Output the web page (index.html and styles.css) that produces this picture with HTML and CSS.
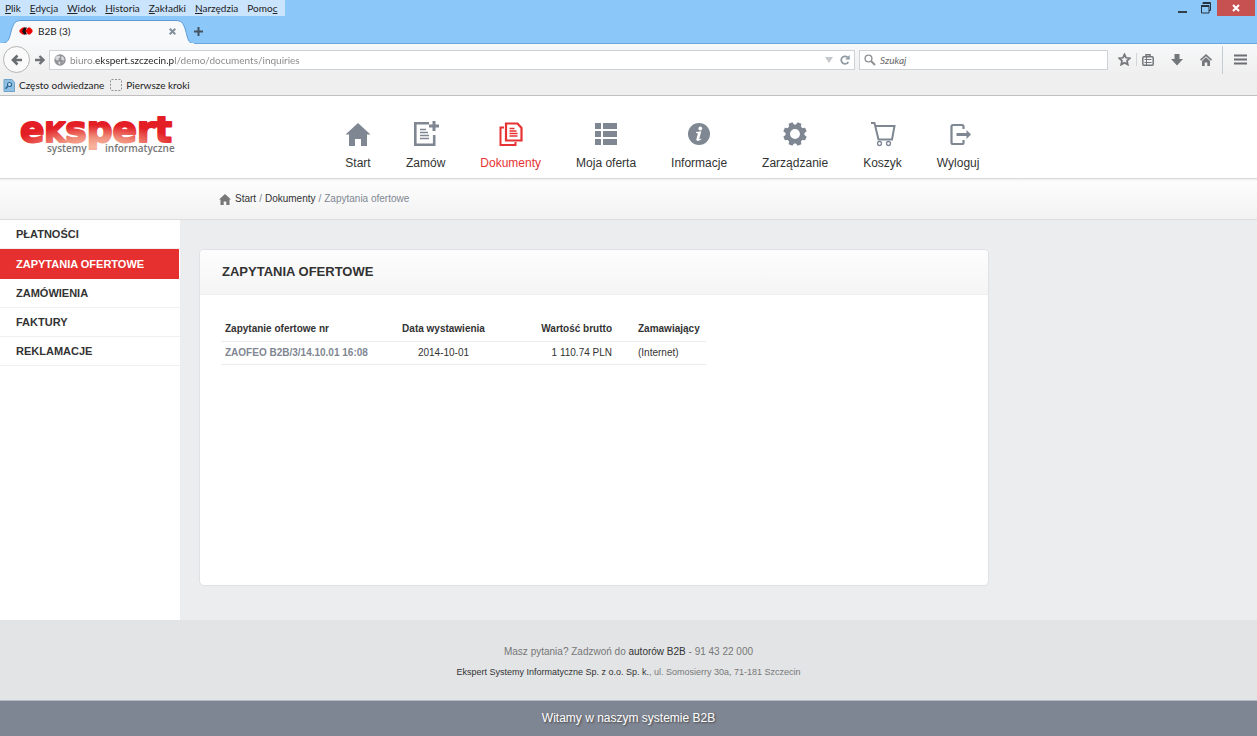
FILE: index.html
```html
<!DOCTYPE html>
<html lang="pl">
<head>
<meta charset="utf-8">
<title>B2B (3)</title>
<link rel="stylesheet" href="styles.css">
</head>
<body>
<div class="browser">
  <div class="titlebar">
    <div class="menubar">
      <button class="menu"><u>P</u>lik</button>
      <button class="menu"><u>E</u>dycja</button>
      <button class="menu"><u>W</u>idok</button>
      <button class="menu"><u>H</u>istoria</button>
      <button class="menu"><u>Z</u>akładki</button>
      <button class="menu"><u>N</u>arzędzia</button>
      <button class="menu">Pomo<u>c</u></button>
    </div>
    <div class="window-buttons">
      <button class="win" aria-label="Minimalizuj"><svg width="10" height="12"><path d="M0 10h9" stroke="#333f4a" stroke-width="2"/></svg></button>
      <button class="win" aria-label="Przywróć"><svg width="10" height="12" fill="none" stroke="#26323d"><path d="M2 2V.5h7.500v8H8"/><path d="M2 1.500h8" stroke-width="1"/><path d="M.5 3.500h7.500v7.500H.5z"/><path d="M0 4h8" stroke-width="2"/></svg></button>
      <button class="win win-close" aria-label="Zamknij"><svg width="8" height="8"><path d="M1 1l6 6M7 1L1 7" stroke="#fff" stroke-width="2"/></svg></button>
    </div>
  </div>
  <div class="tabstrip">
    <div class="tab">
      <svg class="tab-shape" width="194" height="24" viewBox="0 0 194 24"><path d="M0 23.500C9 23.500 9 19 11.500 10 14 2 16 .5 22 .5H175C181 .5 183 2 185.500 10 188 19 188 23.500 194 23.500V24H0z" fill="#f8f9fa" stroke="#5d9bd6" stroke-width="1"/><path d="M0 24h194" stroke="#f8f9fa" stroke-width="2"/></svg>
      <div class="tab-content">
        <svg width="14" height="10" viewBox="0 0 14 10"><path d="M3.500 1.500h2L8 5 5.500 8.500h-2L.5 6V4z" fill="#f00000"/><path d="M5 1.500h3L6.500 5 8 8.500H5L3 5z" fill="#111"/><path d="M9 1.500h2L13.500 4v2L11 8.500H9L6.500 5z" fill="#f00000"/></svg>
        <span class="tab-title">B2B (3)</span>
        <button class="icon-button" aria-label="Zamknij kartę"><svg width="7" height="7"><path d="M.7.7l5.600 5.600M6.300.7L.7 6.300" stroke="#84909b" stroke-width="2"/></svg></button>
      </div>
    </div>
    <button class="icon-button new-tab" aria-label="Nowa karta"><svg width="9" height="9"><path d="M4.500 0v9M0 4.500h9" stroke="#44535f" stroke-width="2"/></svg></button>
  </div>
  <div class="toolbar">
    <button class="back" aria-label="Wstecz"><svg width="12" height="12" viewBox="0 0 12 12"><path d="M11 6H2M6.500 1.500L2 6l4.500 4.500" fill="none" stroke="#6a6e72" stroke-width="2.600"/></svg></button>
    <button class="icon-button forward" aria-label="Dalej"><svg width="10" height="10" viewBox="0 0 10 10"><path d="M0 5h8M4.500 1L8.500 5 4.500 9" fill="none" stroke="#6e7276" stroke-width="2.400"/></svg></button>
    <div class="field address">
      <svg width="12" height="12" viewBox="0 0 12 12"><circle cx="6" cy="6" r="5.700" fill="#8f9397"/><path d="M2 2.500l3-1 1.500 1.500L4.500 4.500 5 6 3 6.500 1 4.500zM7.500 2l2 1 1 3-2 .5L7 5zM4.500 7.500l2 .5-.5 2.500L4.500 10zM8.500 8l1-.5-.5 2z" fill="#d8dadc"/></svg>
      <input class="address-input" type="text" aria-label="Adres" value="biuro.ekspert.szczecin.pl/demo/documents/inquiries">
      <button class="icon-button" aria-label="Historia adresów"><svg width="8" height="6"><path d="M0 0h8L4 6z" fill="#c3c8cc"/></svg></button>
      <button class="icon-button" aria-label="Odśwież"><svg width="10" height="10" viewBox="0 0 10 10"><path d="M8.300 7A3.800 3.800 0 1 1 7.500 2.200" fill="none" stroke="#8c98a2" stroke-width="1.700"/><path d="M9.700 0v4.500H5.200z" fill="#8c98a2"/></svg></button>
    </div>
    <div class="field search">
      <svg width="12" height="12" viewBox="0 0 12 12"><circle cx="4.500" cy="4.500" r="3.400" fill="none" stroke="#8e9296" stroke-width="1.400"/><path d="M7 7l4 4" stroke="#8e9296" stroke-width="2"/></svg>
      <input class="search-input" type="text" aria-label="Szukaj" placeholder="Szukaj">
    </div>
    <div class="tools">
      <button class="icon-button" aria-label="Zakładka"><svg width="13" height="13" viewBox="0 0 13 13"><path d="M6.500 1.300l1.600 3.500 3.700.4L9 7.800l.8 3.800-3.300-1.900-3.300 1.900L4 7.800 1.200 5.200l3.700-.4z" fill="none" stroke="#73777b" stroke-width="1.700"/></svg></button>
      <span class="divider"></span>
      <button class="icon-button" aria-label="Lista zakładek"><svg width="12" height="12" viewBox="0 0 12 12" fill="none" stroke="#73777b"><rect x=".8" y="2.800" width="10.400" height="8.400" rx="1" stroke-width="1.500"/><path d="M4 2V.8h4V2" stroke-width="1.500"/><path d="M2.500 5.500h7M2.500 8.500h7M4.500 3v8"/></svg></button>
      <button class="icon-button" aria-label="Pobieranie"><svg width="12" height="12"><path d="M3.500 0h5v5H12l-6 6.500L0 5h3.500z" fill="#73777b"/></svg></button>
      <button class="icon-button" aria-label="Strona startowa"><svg width="12" height="12"><path d="M6 0l6 5.500-1 1.200L6 2.300 1 6.700 0 5.500zM6 3.300l4 3.600V12H7.300V8.500H4.700V12H2V6.900z" fill="#73777b"/></svg></button>
      <span class="divider divider-tall"></span>
      <button class="icon-button" aria-label="Menu"><svg width="13" height="12"><path d="M0 1.500h13M0 5.500h13M0 9.500h13" stroke="#6b6f74" stroke-width="2"/></svg></button>
    </div>
  </div>
  <div class="bookmarks">
    <a class="bookmark" href="#"><svg width="12" height="13" viewBox="0 0 12 13"><path d="M1 .5h8l2.500 3v9H1z" fill="#8fc0e2" stroke="#6fa3c9"/><circle cx="6.500" cy="5.500" r="2" fill="#c9e4f5" stroke="#2c6796" stroke-width="1.200"/><path d="M5 7L2.500 9.800" stroke="#2c6796" stroke-width="1.600"/></svg>Często odwiedzane</a>
    <a class="bookmark" href="#"><svg width="12" height="12"><rect x=".5" y=".5" width="11" height="11" rx="1" fill="none" stroke="#909090" stroke-dasharray="2 1.500"/></svg>Pierwsze kroki</a>
  </div>
</div>

<header class="header">
  <a class="logo" href="#" aria-label="ekspert systemy informatyczne">
    <svg width="164" height="46" viewBox="0 0 164 46">
      <defs>
        <radialGradient id="glow" gradientUnits="userSpaceOnUse" cx="0" cy="0" r="1" gradientTransform="translate(78 36) scale(86 22)">
          <stop offset="0" stop-color="#f8b8a0"/>
          <stop offset=".45" stop-color="#f08f7c"/>
          <stop offset="1" stop-color="#e31e24"/>
        </radialGradient>
      </defs>
      <text class="logo-name" x="1" y="31" fill="url(#glow)" stroke="url(#glow)">e<tspan class="logo-cap">K</tspan>spert</text>
      <text class="logo-sub" x="28" y="41">systemy</text>
      <text class="logo-sub" x="86" y="41">informatyczne</text>
    </svg>
  </a>
  <nav class="nav">
    <a class="nav-item" href="#"><svg width="26" height="26" viewBox="0 0 26 26"><path d="M13 2l12.500 11.500H22V25h-6v-7h-6v7H4V13.500H.5z"/></svg>Start</a>
    <a class="nav-item" href="#"><svg width="26" height="26" viewBox="0 0 26 26"><path d="M16 2.300H2.300v21.400h18.900V14" fill="none" stroke="currentColor" stroke-width="2.600"/><path d="M19.500 0h3v3.500H26v3h-3.500V10h-3V6.500H16v-3h3.500z"/><path d="M7 8.500h6M7 11.500h8M7 14.500h9M7 17.500h9" stroke="currentColor" stroke-width="1.600"/></svg>Zamów</a>
    <a class="nav-item active" href="#"><svg width="26" height="26" viewBox="0 0 26 26" fill="none" stroke="currentColor"><path d="M6 6.500H2.500v17.500h15V21" stroke-width="2"/><path d="M8 2.500h11.500l4 4.500v12.500H8z" stroke-width="2.200"/><path d="M11.500 7.500h5M11.500 10h7M11.500 12.500h8M11.500 15h8" stroke-width="1.300"/></svg>Dokumenty</a>
    <a class="nav-item" href="#"><svg width="26" height="26" viewBox="0 0 26 26"><path d="M2 2h6v6H2zM10 2h14v6H10zM2 10h6v6H2zM10 10h14v6H10zM2 18h6v6H2zM10 18h14v6H10z"/></svg>Moja oferta</a>
    <a class="nav-item" href="#"><svg width="26" height="26" viewBox="0 0 26 26"><circle cx="13" cy="13" r="11"/><circle cx="14.300" cy="7.500" r="1.900" fill="#fff"/><path d="M10 11l5.300-.7-2 7.200c-.2.800.4.700 1.700-.1l.4.700c-2 2.200-5.600 2.600-5 0l1.400-5.200c.1-.7-.6-.9-1.800-1z" fill="#fff"/></svg>Informacje</a>
    <a class="nav-item" href="#"><svg width="26" height="26" viewBox="0 0 26 26"><circle cx="13" cy="13" r="7.200" fill="none" stroke="currentColor" stroke-width="4.500"/><g id="teeth"><path d="M10 5l1-3.800h4L16 5zM10 21l1 3.800h4L16 21zM5 10l-3.800 1v4L5 16zM21 10l3.800 1v4L21 16z" transform="rotate(22.500 13 13)"/></g><use href="#teeth" transform="rotate(45 13 13)"/></svg>Zarządzanie</a>
    <a class="nav-item" href="#"><svg width="26" height="26" viewBox="0 0 26 26" fill="none" stroke="currentColor"><path d="M1 2h3.500l4 16.500H22L24.500 5H6" stroke-width="2"/><circle cx="9.500" cy="22.500" r="2" stroke-width="1.300"/><circle cx="18.500" cy="22.500" r="2" stroke-width="1.300"/></svg>Koszyk</a>
    <a class="nav-item" href="#"><svg width="26" height="26" viewBox="0 0 26 26"><path d="M18.500 8V5.500q0-1.500-1.500-1.500H8Q6.500 4 6.500 5.500v16Q6.500 23 8 23h9q1.500 0 1.500-1.500V19" fill="none" stroke="currentColor" stroke-width="2.200"/><path d="M11.500 12h10V9l4.500 4.500-4.500 4.500V15h-10z"/></svg>Wyloguj</a>
  </nav>
</header>

<nav class="breadcrumb" aria-label="Ścieżka">
  <svg width="12" height="11" viewBox="0 0 12 11"><path d="M6 0l6 5.500h-1.500V11H7.300V7.500H4.700V11H1.500V5.500H0z" fill="#777"/></svg>
  <a href="#">Start</a><span>/</span><a href="#">Dokumenty</a><span>/</span><span>Zapytania ofertowe</span>
</nav>

<div class="content">
  <nav class="sidebar" aria-label="Dokumenty">
    <a class="side-item" href="#">PŁATNOŚCI</a>
    <a class="side-item selected" href="#">ZAPYTANIA OFERTOWE</a>
    <a class="side-item" href="#">ZAMÓWIENIA</a>
    <a class="side-item" href="#">FAKTURY</a>
    <a class="side-item" href="#">REKLAMACJE</a>
  </nav>
  <main class="panel">
    <h1 class="panel-title">ZAPYTANIA OFERTOWE</h1>
    <div class="panel-body">
      <table class="inquiries">
        <thead><tr><th class="number">Zapytanie ofertowe nr</th><th class="date">Data wystawienia</th><th class="amount">Wartość brutto</th><th class="buyer">Zamawiający</th></tr></thead>
        <tbody><tr><td class="number"><a href="#">ZAOFEO B2B/3/14.10.01 16:08</a></td><td class="date">2014-10-01</td><td class="amount">1 110.74 PLN</td><td class="buyer">(Internet)</td></tr></tbody>
      </table>
    </div>
  </main>
</div>

<footer>
  <div class="contact">
    <p class="question">Masz pytania? Zadzwoń do <a href="#">autorów B2B</a> - 91 43 22 000</p>
    <p class="company"><a href="#">Ekspert Systemy Informatyczne Sp. z o.o. Sp. k.</a>, ul. Somosierry 30a, 71-181 Szczecin</p>
  </div>
  <div class="welcome">Witamy w naszym systemie B2B</div>
</footer>
</body>
</html>
```

FILE: styles.css
```css
* { box-sizing: border-box; }
body {
  margin: 0;
  min-height: 100vh;
  display: flex;
  flex-direction: column;
  font: 10px/16px "Liberation Sans", Arial, sans-serif;
  color: #333;
  background: #ebedef;
}
a { color: inherit; text-decoration: none; }
svg { display: block; flex: none; }
button, input { font: inherit; color: inherit; border: 0; padding: 0; margin: 0; background: none; }

/* Browser window */
.browser {
  font: 10px/16px Lato, "Open Sans", "Noto Sans", sans-serif;
  color: #222;
  background: #8cc7fa;
}
.titlebar { display: flex; justify-content: space-between; height: 18px; }
.menubar { display: flex; gap: 9px; height: 16px; padding: 0 8px 0 5px; background: #c9e4fc; }
.window-buttons { display: flex; align-items: flex-start; height: 16px; }
.win { width: 23px; height: 16px; display: flex; align-items: center; justify-content: center; }
.win-close { width: 38px; margin: 0 2px 0 0; background: #c75050; }
.tabstrip { display: flex; height: 26px; border-bottom: 1px solid #6ba7df; padding-top: 2px; }
.tab { display: grid; width: 194px; height: 24px; }
.tab-shape, .tab-content { grid-area: 1 / 1; }
.tab-content { display: flex; align-items: center; gap: 5px; padding: 0 18px 2px 19px; }
.tab-title { flex: 1; }
.icon-button { display: flex; align-items: center; justify-content: center; }
.new-tab { height: 22px; }
.toolbar { display: flex; align-items: center; height: 31px; padding: 0 10px 0 3px; background: linear-gradient(#f7f8f9, #efefef); }
.back { width: 27px; height: 27px; border: 1px solid #b4b4b4; border-radius: 50%; background: #fafafa; display: flex; align-items: center; justify-content: center; }
.forward { width: 19px; }
.field { display: flex; align-items: center; gap: 4px; height: 20px; padding: 0 4px; background: #fff; border: 1px solid #cdd2d7; }
.address { flex: 1; }
.address-input {
  flex: 1;
  min-width: 0;
  color: transparent;
  caret-color: #222;
  background: linear-gradient(90deg, #858585 25px, #222 25px, #222 105px, #858585 105px);
  background-clip: text;
  -webkit-background-clip: text;
}
.address .icon-button { margin-left: 3px; }
.search { width: 249px; margin-left: 4px; }
.search-input { flex: 1; min-width: 0; }
.search-input::placeholder { color: #666; font-style: italic; opacity: 1; }
.tools { display: flex; align-items: center; gap: 17px; margin-left: 10px; }
.divider { width: 1px; height: 13px; background: #d2d6da; margin: 0 -12px; }
.divider-tall { height: 28px; margin: 0 -6px 0 -7px; background: #c4ccd5; }
.bookmarks { display: flex; align-items: center; gap: 6px; height: 21px; padding: 0 3px; background: #efefef; border-bottom: 1px solid #c0c0c0; }
.bookmark { display: flex; align-items: center; gap: 4px; }

/* Site header */
.header { display: flex; align-items: flex-start; height: 83px; padding-left: 19px; background: #fff; border-bottom: 1px solid #d8d8d8; }
.logo { width: 158px; padding-top: 15px; }
.logo-name { font: bold 36px "DejaVu Sans", sans-serif; stroke-width: 2px; stroke-linejoin: round; }
.logo-cap { font-size: 27px; }
.logo-sub { font: 600 10px "Open Sans", sans-serif; fill: #777; }
.nav { display: flex; gap: 35px; margin-left: 168px; padding-top: 25px; }
.nav-item { display: flex; flex-direction: column; align-items: center; gap: 7px; font-size: 12px; line-height: 18px; }
.nav-item svg { color: #7f8793; }
.nav-item svg:not([fill]) { fill: currentColor; }
.nav-item.active, .nav-item.active svg { color: #e63232; }

.breadcrumb { display: flex; align-items: center; gap: 3px; height: 41px; padding-left: 219px; color: #7f8793; background: linear-gradient(#f0f0f0, #fdfdfd 3px, #f2f2f2); border-bottom: 1px solid #ddd; }
.breadcrumb svg { margin-right: 1px; }
.breadcrumb a { color: #333; }

/* Documents */
.content { flex: 1; display: flex; align-items: flex-start; }
.sidebar { width: 180px; align-self: stretch; background: #fff; }
.side-item { display: block; height: 29px; padding: 6px 16px; border-bottom: 1px solid #f0f0f0; font-size: 11px; font-weight: bold; }
.side-item.selected { height: 30px; padding-top: 7px; margin-right: 1px; color: #fff; background: #e63030; border-color: #e63030; }
.panel { width: 790px; min-height: 337px; margin: 29px 19px 34px; background: #fff; border: 1px solid #dfe1e4; border-radius: 5px; overflow: hidden; }
.panel-title { margin: 0; padding: 12px 22px; font-size: 13px; line-height: 20px; background: linear-gradient(#fdfdfd, #f5f5f5); border-bottom: 1px solid #f0f0f0; }
.panel-body { padding: 23px 21px; }
.inquiries { border-collapse: collapse; table-layout: fixed; width: 485px; }
.inquiries th, .inquiries td { height: 23px; padding: 0 4px; border-bottom: 1px solid #ececec; text-align: left; white-space: nowrap; }
.inquiries .number { width: 175px; }
.inquiries .date { width: 95px; text-align: center; }
.inquiries .amount { width: 125px; text-align: right; }
.inquiries .buyer { padding-left: 22px; padding-right: 0; }
.inquiries a { font-weight: bold; color: #7f8793; }

/* Footer */
footer { text-align: center; }
.contact { height: 80px; padding-top: 22px; background: #e2e4e6; color: #777; }
.contact p { margin: 0; line-height: 20px; }
.contact a { color: #333; }
.company { font-size: 9px; }
.welcome { height: 36px; background: #7f8693; border-top: 1px solid #b8bcc4; color: #fff; font-size: 12px; line-height: 34px; text-shadow: 1px 1px 2px #444; }
```
